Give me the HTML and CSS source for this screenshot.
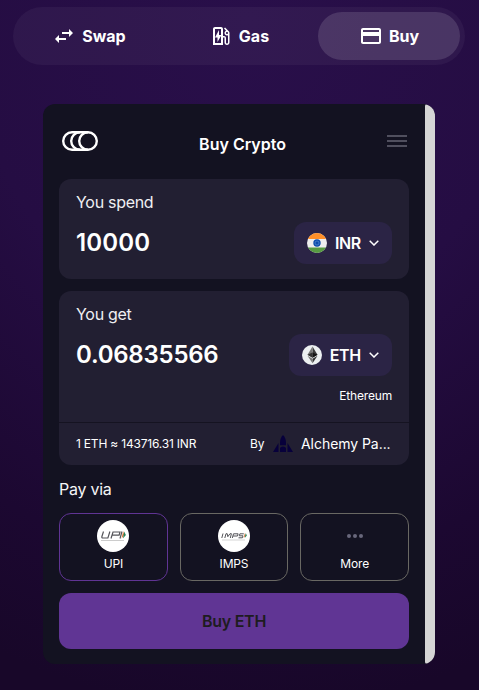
FILE: index.html
```html
<!DOCTYPE html>
<html lang="en">
<head>
<meta charset="utf-8">
<title>Buy Crypto</title>
<link rel="stylesheet" href="styles.css">
</head>
<body>
<nav class="tabs">
  <a class="tab"><svg class="icon" viewBox="0 0 24 24"><path d="M6.990 11 3 15l3.990 4v-3H14v-2H6.990v-3zM21 9l-3.990-4v3H10v2h7.010v3L21 9z"/></svg>Swap</a>
  <a class="tab"><svg class="icon" viewBox="0 0 24 24"><path d="m19.770 7.230.010-.010-3.720-3.720L15 4.560l2.110 2.110C16.170 7 15.500 7.930 15.500 9c0 1.380 1.120 2.500 2.500 2.500.360 0 .690-.080 1-.210v7.210c0 .550-.450 1-1 1s-1-.450-1-1V14c0-1.100-.9-2-2-2h-1V5c0-1.100-.9-2-2-2H6c-1.100 0-2 .9-2 2v16h10v-7.500h1.500v5c0 1.380 1.120 2.500 2.500 2.500s2.500-1.120 2.500-2.500V9c0-.690-.280-1.320-.730-1.770zM18 10c-.550 0-1-.450-1-1s.450-1 1-1 1 .450 1 1-.450 1-1 1zM12 19H6V5h6v14zm-3.500-1 4-7H10V6l-4 7.500h2.500V18z"/></svg>Gas</a>
  <a class="tab active"><svg class="icon" viewBox="0 0 24 24"><path d="M20 4H4c-1.110 0-1.990.89-1.990 2L2 18c0 1.110.89 2 2 2h16c1.110 0 2-.89 2-2V6c0-1.110-.89-2-2-2zm0 14H4v-6h16v6zm0-10H4V6h16v2z"/></svg>Buy</a>
</nav>
<main class="widget">
  <div class="content">
    <header class="head">
      <svg class="logo" viewBox="0 0 36 20"><rect x="1.200" y="1.200" width="33.600" height="17.600" rx="8.800"/><path d="M18 1.200a8.800 8.800 0 0 0 0 17.600M26 1.200a8.800 8.800 0 0 0 0 17.600"/></svg>
      <h1>Buy Crypto</h1>
      <svg class="menu" viewBox="0 0 20 12"><path d="M0 1h20M0 6h20M0 11h20"/></svg>
    </header>
    <section class="panel spend">
      <div class="label">You spend</div>
      <div class="row"><span class="amount fiat">10000</span>
        <button class="select"><svg class="coin" viewBox="0 0 20 20"><clipPath id="disc"><circle cx="10" cy="10" r="10"/></clipPath><g clip-path="url(#disc)"><path fill="#eee" d="M0 0h20v20H0z"/><path fill="#ff9029" d="M0 0h20v6H0z"/><path fill="#579b42" d="M0 14.500h20V20H0z"/></g><circle cx="10" cy="10" r="3.700" fill="#0c4cad"/><circle cx="10" cy="10" r="2" fill="none" stroke="#75a5db" stroke-width=".5"/></svg><span class="code">INR</span><svg class="chev" viewBox="0 0 10 6"><path d="m.7.7 4.300 4.300L9.300.7"/></svg></button>
      </div>
    </section>
    <section class="panel get">
      <div class="get-main">
        <div class="label">You get</div>
        <div class="row"><span class="amount">0.06835566</span>
          <button class="select"><svg class="coin" viewBox="0 0 20 20"><circle cx="10" cy="10" r="10" fill="#ecf0f1"/><path fill="#3b3b3b" d="m10.500 1.500 5 8.300-5 3z"/><path fill="#777" d="m10.500 1.500-5 8.300 5 3z"/><path fill="#151515" d="m10.500 7.500 5 2.300-5 3z"/><path fill="#333" d="m10.500 7.500-5 2.300 5 3z"/><path fill="#333" d="m10.500 13.800 5-3-5 7.500z"/><path fill="#777" d="m10.500 13.800-5-3 5 7.500z"/></svg><span class="code">ETH</span><svg class="chev" viewBox="0 0 10 6"><path d="m.7.7 4.300 4.300L9.300.7"/></svg></button>
        </div>
        <div class="network">Ethereum</div>
      </div>
      <div class="quote"><span class="rate">1 ETH ≈ 143716.31 INR</span><span class="by">By</span>
        <svg class="provider" viewBox="0 0 20 18"><path d="M10 0c2 2 3 4.500 3 8v2.200H7V8c0-3.500 1-6 3-8zM5.500 8v9H0zM14.500 8v9H20zM7 17v-3.500c0-2.800 6-2.800 6 0V17z"/></svg>
        <span class="name">Alchemy Pa...</span></div>
    </section>
    <div class="via">Pay via</div>
    <div class="methods">
      <div class="method chosen"><svg class="badge" viewBox="0 0 32 32"><circle cx="16" cy="16" r="16" fill="#fff"/><g fill="none" stroke="#55555a" stroke-width="1.200"><path d="m6.500 11.500-1.600 5q-.4 1.500 1 1.500h5l2-6.500M14 18.500l2-6.500h7l-.9 3.200h-6.600M23 18.500l2-7"/></g><path fill="#e46d2c" d="m26.200 11 .9 4-2.500 3.500z"/><path fill="#26845c" d="m27.200 11.500 1.700 3.500-3 3.500z"/><path stroke="#aaa" stroke-width=".6" d="M4 20.500h23"/></svg>UPI</div>
      <div class="method"><svg class="badge" viewBox="0 0 32 32"><circle cx="16" cy="16" r="16" fill="#fff"/><g fill="none" stroke="#55555a" stroke-width="1"><path d="m5 13.500-1.200 4.500M6.800 18 8 13.700h1.200l.6 3 2.200-3h1.400L12.300 18M14.300 18l1.200-4.200h4.600l-.6 2.200h-4.400M25.800 13.800h-3.900l-.6 2h3.700l-.6 2h-3.900"/></g><path fill="#e46d2c" d="m27 13 .7 2.500-2.200 2.500z"/><path fill="#26845c" d="m27.800 13.300 1.100 2.200-2.200 2.500z"/><path stroke="#aaa" stroke-width=".5" d="M4 20h23"/></svg>IMPS</div>
      <div class="method"><svg class="badge" viewBox="0 0 32 32"><g fill="#68677b"><circle cx="10" cy="16" r="2"/><circle cx="16" cy="16" r="2"/><circle cx="22" cy="16" r="2"/></g></svg>More</div>
    </div>
    <button class="submit">Buy ETH</button>
  </div>
  <div class="scrollbar"></div>
</main>
</body>
</html>
```
FILE: styles.css
```css
* { box-sizing: border-box; }
body { margin: 0; height: 690px; padding: 7px 14px 0 13px; overflow: hidden; color: #fff; font-family: Inter, sans-serif; background: radial-gradient(ellipse 620px 690px at 52% 3%, #290f4a 0%, #250d43 45%, #1c0831 80%, #180729 100%); }
svg { display: block; flex: none; }
button { border: 0; color: inherit; font: inherit; }
.tabs { display: grid; grid-template-columns: 142px 158px 142px; height: 58px; padding: 5px; border-radius: 29px; background: rgba(255,255,255,.045); }
.tab { display: flex; align-items: center; justify-content: center; gap: 6px; border-radius: 24px; font-size: 16px; font-weight: 700; }
.icon { width: 24px; height: 24px; fill: #fff; }
.active { background: rgba(255,255,255,.13); }
.widget { display: flex; width: 392px; height: 560px; margin: 39px 0 0 30px; overflow: hidden; border-radius: 12px; background: #131221; }
.content { width: 382px; padding: 0 16px; }
.scrollbar { width: 10px; background: #d5d5d5; border-radius: 3px 12px 12px 3px; }
.head { display: flex; align-items: center; justify-content: space-between; height: 75px; padding: 0 2px 2px 3px; }
.logo { width: 36px; height: 20px; fill: none; stroke: #fff; stroke-width: 2.400; }
.head h1 { margin: 6px 12px 0 12px; font-size: 16px; font-weight: 600; }
.menu { width: 20px; height: 12px; stroke: #504f5e; stroke-width: 2; }
.panel { border-radius: 12px; background: #221f32; }
.spend { height: 100px; padding: 13px 17px; }
.get { height: 174px; margin-top: 12px; }
.get-main { height: 132px; padding: 13px 17px; border-bottom: 1px solid #151321; }
.label { font-size: 16px; line-height: 20px; color: #f0eff2; letter-spacing: -.3px; }
.row { display: flex; justify-content: space-between; align-items: center; height: 42px; margin-top: 10px; }
.amount { padding-bottom: 2px; font-size: 24px; font-weight: 600; letter-spacing: -.24px; }
.fiat { letter-spacing: .15px; }
.select { display: flex; align-items: center; gap: 8px; height: 42px; padding: 0 13px; border-radius: 12px; background: #2b2445; font-size: 16px; font-weight: 600; }
.code { letter-spacing: -.3px; }
.coin { width: 20px; height: 20px; }
.chev { width: 10px; height: 6px; fill: none; stroke: #fff; stroke-width: 1.500; }
.network { margin-top: 12px; text-align: right; font-size: 12px; line-height: 16px; letter-spacing: -.18px; }
.quote { display: flex; align-items: center; height: 42px; padding: 0 0 1px 17px; font-size: 12px; }
.rate { width: 174px; letter-spacing: -.2px; }
.by { width: 23px; }
.provider { width: 20px; height: 18px; fill: #07003b; }
.name { margin-left: 8px; font-size: 14px; letter-spacing: -.05px; }
.via { margin-top: 14px; font-size: 16px; line-height: 20px; color: #f5f5f7; letter-spacing: -.25px; }
.methods { display: grid; grid-template-columns: repeat(3, 1fr); gap: 12px; margin-top: 14px; }
.method { display: flex; flex-direction: column; align-items: center; height: 68px; padding-top: 6px; border: 1px solid #696863; border-radius: 12px; font-size: 12px; line-height: 15px; gap: 4px; letter-spacing: -.15px; }
.chosen { border-color: #603494; }
.badge { width: 32px; height: 32px; }
.submit { display: block; width: 100%; height: 56px; margin-top: 12px; border-radius: 12px; background: #603594; color: #1e1c20; font-size: 16px; font-weight: 600; letter-spacing: -.25px; }
```
